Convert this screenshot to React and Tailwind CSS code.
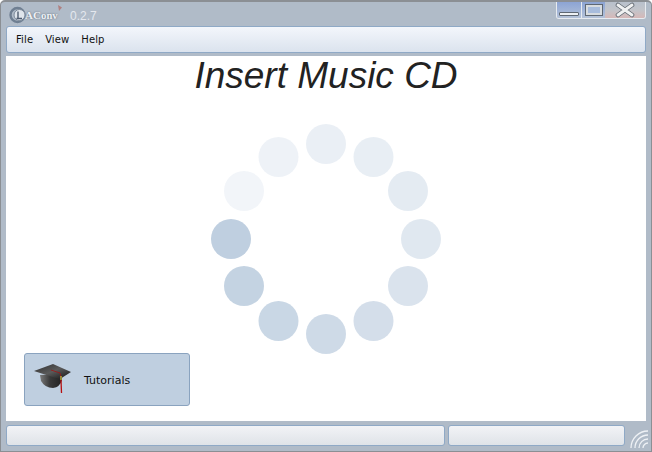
const dots = [
  [326, 144, 0.33], [373.5, 157, 0.36], [408, 191, 0.42], [421, 239, 0.48],
  [408, 286, 0.58], [373.5, 321, 0.68], [326, 334, 0.76], [278.5, 321, 0.84],
  [244, 286, 0.92], [231, 239, 1], [244, 191, 0.2], [278.5, 157, 0.27],
];

function Cap() {
  return (
    <svg width="42" height="36" viewBox="0 0 42 36" className="shrink-0">
      <defs>
        <linearGradient id="capb" x1="0" y1="0" x2="1" y2="0">
          <stop offset="0" stopColor="#7a7a7a" />
          <stop offset="0.45" stopColor="#3a3a3a" />
          <stop offset="1" stopColor="#222" />
        </linearGradient>
        <linearGradient id="capt" x1="0" y1="0" x2="1" y2="1">
          <stop offset="0" stopColor="#2e2e2e" />
          <stop offset="0.5" stopColor="#5a5a5a" />
          <stop offset="1" stopColor="#111" />
        </linearGradient>
      </defs>
      <path d="M7 13 L8 19 Q12 26 20 26 Q27 25 29 18 L29 12 Z" fill="url(#capb)" />
      <path d="M1 9 L20 2 L38 10 L27 17 Q16 14 1 9 Z" fill="url(#capt)" />
      <path d="M18 8 L27 11 L28 15" stroke="#a01414" strokeWidth="0.8" fill="none" />
      <path d="M28 14 L28 18" stroke="#d8c840" strokeWidth="1.2" />
      <path d="M28 18 L28.5 31" stroke="#b81010" strokeWidth="1.3" />
    </svg>
  );
}

function Logo() {
  return (
    <div className="flex items-center w-[54px] h-[18px] relative translate-y-[1px]">
      <svg width="18" height="18" viewBox="0 0 18 18" className="shrink-0">
        <circle cx="8.5" cy="9" r="7" fill="none" stroke="#6f7f92" strokeWidth="2.4" />
        <circle cx="10.5" cy="9" r="5.5" fill="#dfe5ec" stroke="#7d8a9a" strokeWidth="1" />
        <path d="M9 5.5 V12.5 M7.5 12.5 H13" stroke="#4f5d70" strokeWidth="1.4" fill="none" />
      </svg>
      <span className="font-['Liberation_Serif',serif] font-bold text-[11px] leading-none text-[#eef1f5] -ml-[2px] mt-[2px] [text-shadow:0_0_2px_#55606e]">ACo<span className="text-[10.5px]">nv</span></span>
      <svg width="6" height="8" viewBox="0 0 6 8" className="absolute left-[48px] -top-[2px]">
        <path d="M1 1 L5 3.5 L2 7 Z" fill="#b08080" />
      </svg>
    </div>
  );
}

function Well({ className }) {
  return <div className={`h-[21px] rounded-[3px] border border-[#8fa9c6] bg-gradient-to-b from-[#f2f3f6] to-[#dfe3e8] ${className}`} />;
}

export default function App() {
  return (
    <div className="relative w-[652px] h-[452px] bg-[#b0bbc8] flex flex-col border border-t-2 border-[#8b8f94] rounded-t-[5px] font-['DejaVu_Sans',sans-serif] overflow-hidden">
      <div className="h-[24px] flex items-center pl-[8px] pr-[1px] shrink-0 gap-[7px]">
        <Logo />
        <span className="font-['Liberation_Sans',sans-serif] text-[12px] text-[#e4e8ee] mt-[4px]">0.2.7</span>
        <div className="ml-auto flex self-start h-[17px] w-[90px] border border-t-0 border-[#e7ebf0] rounded-b-[3px] overflow-hidden mr-[4px]">
          <div className="w-[24px] relative bg-gradient-to-b from-[#8ca4d4] to-[#b4c2d8]">
            <div className="absolute left-[2px] right-[2px] bottom-[2px] h-[4px] border border-[#5f6873] bg-[#eef1f4] rounded-[1px]" />
          </div>
          <div className="w-[24px] relative bg-gradient-to-b from-[#8ca4d4] to-[#b4c2d8] border-l border-[#e7ebf0] flex items-center justify-center">
            <div className="w-[16px] h-[10px] border-2 border-[#d8dce0] outline outline-1 outline-[#5f6873] bg-[#a8bcdc]" />
          </div>
          <div className="flex-1 relative bg-gradient-to-b from-[#b8c0cc] via-[#c2c4ca] to-[#d6b8b8] flex items-center justify-center">
            <svg width="24" height="16" viewBox="0 0 24 16">
              <path d="M5 3 L19 13 M19 3 L5 13" stroke="#5e666f" strokeWidth="4.6" strokeLinecap="round" />
              <path d="M5 3 L19 13 M19 3 L5 13" stroke="#f0f1f2" strokeWidth="3" strokeLinecap="round" />
            </svg>
          </div>
        </div>
      </div>
      <div className="mx-[5px] h-[27px] shrink-0 flex items-center pl-[9px] rounded-[3px] border border-[#8fa9c6] bg-gradient-to-b from-[#f3f6fb] to-[#dbe3ee] text-[10px] tracking-[0.1px] text-[#111]">
        <span>File</span>
        <span className="ml-[12px]">View</span>
        <span className="ml-[12px]">Help</span>
      </div>
      <div className="mx-[5px] mt-[3px] h-[365px] shrink-0 bg-white flex flex-col relative">
        <h1 className="font-['Liberation_Sans',sans-serif] italic font-normal text-[37px] leading-[42px] text-center text-[#222] -mt-[1px]">Insert Music CD</h1>
        <svg width="640" height="365" className="absolute left-0 top-0" viewBox="6 56 640 365">
          {dots.map(([x, y, a], i) => <circle key={i} cx={x} cy={y} r="20" fill="#bfcfe0" fillOpacity={a} />)}
        </svg>
        <div className="absolute left-[18px] top-[297px] w-[166px] h-[53px] rounded-[3px] border border-[#8aa3bf] bg-[#bfcfe0] flex items-center pl-[8px] gap-[9px] text-[11px] text-[#111]">
          <Cap />
          <span className="translate-y-[2px]">Tutorials</span>
        </div>
      </div>
      <div className="mx-[5px] mt-[4px] flex gap-[3px] pr-[21px]">
        <Well className="w-[439px]" />
        <Well className="w-[177px]" />
      </div>
      <svg width="22" height="22" viewBox="0 0 22 22" className="absolute left-[627px] top-[426px]">
        {[5, 9, 13, 17].map((r) => (
          <path key={r} d={`M${20 - r} 20 A${r} ${r} 0 0 1 20 ${20 - r}`} fill="none" stroke="#eef1f5" strokeWidth="1.3" />
        ))}
      </svg>
    </div>
  );
}
